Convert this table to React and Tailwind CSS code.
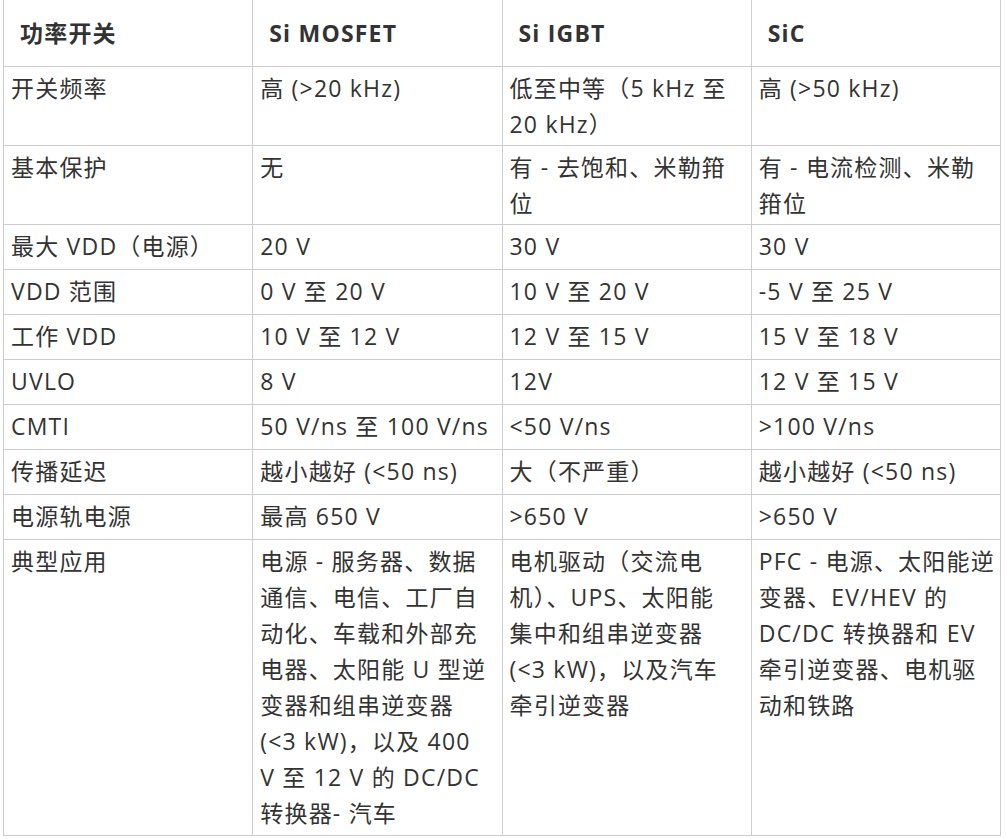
const FONT = { fontFamily: '"Open Sans", "Noto Sans CJK SC", sans-serif' }

const HEAD = ['功率开关', 'Si MOSFET', 'Si IGBT', 'SiC']

const ROWS = [
  { h: 'h-[79px]', cells: [['开关频率'], ['高 (>20 kHz)'], ['低至中等（5 kHz 至', '20 kHz）'], ['高 (>50 kHz)']] },
  { h: 'h-[79px]', cells: [['基本保护'], ['无'], ['有 - 去饱和、米勒箝', '位'], ['有 - 电流检测、米勒', '箝位']] },
  { h: 'h-[45px]', cells: [['最大 VDD（电源）'], ['20 V'], ['30 V'], ['30 V']] },
  { h: 'h-[45px]', cells: [['VDD 范围'], ['0 V 至 20 V'], ['10 V 至 20 V'], ['-5 V 至 25 V']] },
  { h: 'h-[45px]', cells: [['工作 VDD'], ['10 V 至 12 V'], ['12 V 至 15 V'], ['15 V 至 18 V']] },
  { h: 'h-[45px]', cells: [['UVLO'], ['8 V'], ['12V'], ['12 V 至 15 V']] },
  { h: 'h-[45px]', cells: [['CMTI'], ['50 V/ns 至 100 V/ns'], ['<50 V/ns'], ['>100 V/ns']] },
  { h: 'h-[45px]', cells: [['传播延迟'], ['越小越好 (<50 ns)'], ['大（不严重）'], ['越小越好 (<50 ns)']] },
  { h: 'h-[45px]', cells: [['电源轨电源'], ['最高 650 V'], ['>650 V'], ['>650 V']] },
  {
    h: 'h-[296px]',
    cells: [
      ['典型应用'],
      ['电源 - 服务器、数据', '通信、电信、工厂自', '动化、车载和外部充', '电器、太阳能 U 型逆', '变器和组串逆变器', '(<3 kW)，以及 400', 'V 至 12 V 的 DC/DC', '转换器- 汽车'],
      ['电机驱动（交流电', '机）、UPS、太阳能', '集中和组串逆变器', '(<3 kW)，以及汽车', '牵引逆变器'],
      ['PFC - 电源、太阳能逆', '变器、EV/HEV 的', 'DC/DC 转换器和 EV', '牵引逆变器、电机驱', '动和铁路'],
    ],
  },
]

function Cell({ lines }) {
  return (
    <td className="border border-[#cccccc] align-top pl-[7px] pr-0 pt-[3px] pb-[3px]">
      {lines.map((l, i) => (
        <div key={i} className="whitespace-nowrap leading-[36px]">{l}</div>
      ))}
    </td>
  )
}

export default function App() {
  return (
    <div className="w-[1006px] h-[839px] bg-white overflow-hidden" style={FONT}>
      <table className="ml-[3px] -mt-px w-[998px] border-collapse table-fixed text-[23px] tracking-[1.2px] text-[#333333]">
        <thead>
          <tr className="h-[67px]">
            {HEAD.map((t, i) => (
              <th key={i} className="border border-[#cccccc] text-left font-bold pl-[16px] align-middle">
                {t}
              </th>
            ))}
          </tr>
        </thead>
        <tbody>
          {ROWS.map((r, i) => (
            <tr key={i} className={r.h}>
              {r.cells.map((c, j) => (
                <Cell key={j} lines={c} />
              ))}
            </tr>
          ))}
        </tbody>
      </table>
    </div>
  )
}
